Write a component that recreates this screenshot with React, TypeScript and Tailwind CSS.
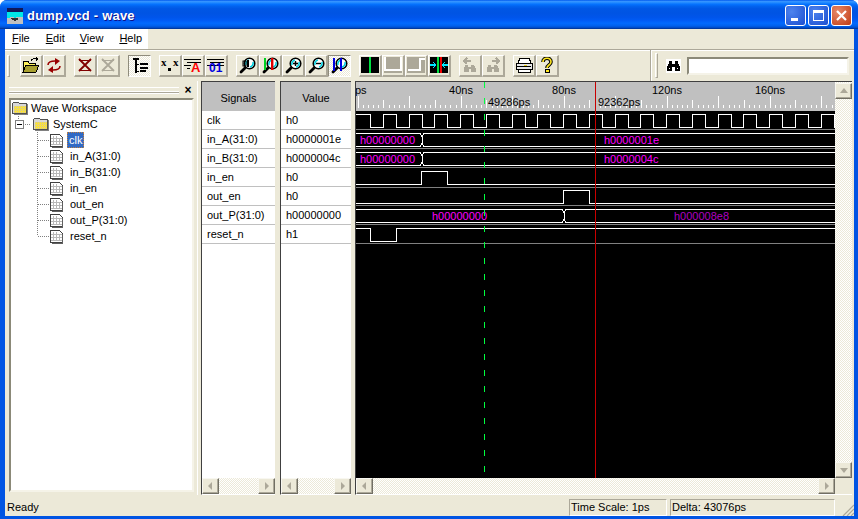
import React from "react";

const Ic = ({ children, w = 16, h = 16 }: { children: React.ReactNode; w?: number; h?: number }) => (
  <svg width={w} height={h} viewBox={`0 0 ${w} ${h}`} shapeRendering="crispEdges" className="block">
    {children}
  </svg>
);

const OpenIcon = () => (
  <Ic w={18}>
    <path d="M1 4h5l1 2h6v2H5L2 14H1z" fill="#fff35c" stroke="#000" />
    <path d="M4 8h13l-3 7H1z" fill="#a8a030" stroke="#000" />
    <path d="M9 4c1-2 3-3 5-2" fill="none" stroke="#000" />
    <path d="M14 0l3 2-3 2z" fill="#000" />
  </Ic>
);
const RefreshIcon = () => (
  <Ic w={18}>
    <g shapeRendering="auto">
      <path d="M3 8c0-3 3-4 7-4" fill="none" stroke="#900" strokeWidth="1.6" />
      <path d="M10 1l5 3-5 4z" fill="#900" />
      <path d="M15 9c0 3-3 4-7 4" fill="none" stroke="#900" strokeWidth="1.6" />
      <path d="M8 16l-5-3 5-4z" fill="#900" />
    </g>
  </Ic>
);
const CrossIcon = ({ c }: { c: string }) => (
  <Ic>
    <path d="M2 3h12M2 13h12" stroke={c} />
    <g shapeRendering="auto">
      <path d="M2 2l12 12M14 2L2 14" stroke={c} strokeWidth="1.8" />
    </g>
  </Ic>
);
const TreeIcon = () => (
  <Ic>
    <path d="M1 0h6v2H1zM3 2h2v13H3zM5 6h2v1H5zM5 13h2v1H5z" fill="#000" />
    <path d="M8 5h8v2H8zM8 9h8v2H8zM8 12h6v2H8z" fill="#000" />
  </Ic>
);
const XxIcon = () => (
  <Ic w={18}>
    <text x="0" y="9" fontFamily="Liberation Serif" fontSize="11" fontWeight="700" fill="#000">x</text>
    <text x="12" y="9" fontFamily="Liberation Serif" fontSize="11" fontWeight="700" fill="#000">x</text>
    <rect x="7" y="11" width="3" height="3" fill="#000" />
  </Ic>
);
const AIcon = () => (
  <Ic w={18}>
    <path d="M0 2h17M3 5h14M0 8h7M3 11h3" stroke="#000" />
    <text x="7" y="15" fontFamily="Liberation Sans" fontSize="13" fontWeight="700" fill="#f00">A</text>
  </Ic>
);
const ZeroOneIcon = () => (
  <Ic w={18}>
    <path d="M0 2h17M3 5h14M0 8h17" stroke="#000" />
    <text x="2" y="15" fontFamily="Liberation Sans" fontSize="12" fontWeight="700" fill="#0000e0">01</text>
  </Ic>
);
const Lens = ({ children }: { children?: React.ReactNode }) => (
  <svg width="17" height="17" viewBox="0 0 17 17" className="block">
    <path d="M6 11l-4 4" stroke="#000" strokeWidth="2.8" strokeLinecap="round" />
    <circle cx="10.5" cy="6.5" r="5.3" fill="#fff" stroke="#000" strokeWidth="1.5" />
    <path d="M7 8a4 4 0 0 1 3-5M14 5a4 4 0 0 1-3 5" fill="none" stroke="#00d0e0" strokeWidth="1.6" />
    {children}
  </svg>
);
const PanelIcon = ({ children }: { children: React.ReactNode }) => <Ic w={18}>{children}</Ic>;
const DisabledBino = ({ arrow }: { arrow: string }) => (
  <Ic>
    <path d="M3 8h3v2h3V8h3l2 4v3H9v-3H7v3H2v-3z" fill="#aca899" />
    <path d={arrow} fill="none" stroke="#aca899" strokeWidth="1.5" />
  </Ic>
);

const Btn = ({ children, on }: { children: React.ReactNode; on?: boolean }) => (
  <div
    className={
      on
        ? "w-[23px] h-[22px] flex items-center justify-center border border-t-[#8f8c7d] border-l-[#8f8c7d] border-r-white border-b-white bg-[repeating-conic-gradient(#ece9d8_0_25%,#ffffff_0_50%)] bg-[length:2px_2px]"
        : "w-[23px] h-[22px] flex items-center justify-center border-t border-l border-white border-r-2 border-b-2 border-r-[#aca899] border-b-[#aca899] bg-[#ece9d8]"
    }
  >
    {children}
  </div>
);

const Tri = ({ dir }: { dir: "l" | "r" | "u" | "d" }) => {
  const d = { l: "M7 2v8L3 6z", r: "M4 2v8l4-4z", u: "M6 3l4 5H2z", d: "M2 4h8L6 9z" }[dir];
  return (
    <svg width="12" height="12" viewBox="0 0 12 12" className="block">
      <path d={d} fill="#aca899" />
    </svg>
  );
};

const SBtn = ({ dir }: { dir: "l" | "r" | "u" | "d" }) => (
  <div className="w-[17px] h-[16px] shrink-0 flex items-center justify-center bg-[#ece9d8] border-t border-l border-[#f8f7f0] border-r border-b border-r-[#716f64] border-b-[#716f64] shadow-[inset_-1px_-1px_0_#aca899]">
    <Tri dir={dir} />
  </div>
);

const HScroll = () => (
  <div className="h-[16px] flex justify-between shrink-0 bg-[repeating-conic-gradient(#ece9d8_0_25%,#ffffff_0_50%)] bg-[length:2px_2px]">
    <SBtn dir="l" />
    <SBtn dir="r" />
  </div>
);

const DataCol = ({ title, rows, width }: { title: string; rows: string[]; width: string }) => (
  <div className={`${width} shrink-0 flex flex-col border-t border-l border-[#404040] border-b border-b-white`}>
    <div className="h-[29px] shrink-0 bg-[#c0c0c0] flex items-center justify-center pt-[3px]">{title}</div>
    <div className="flex-1 bg-white">
      {rows.map((r) => (
        <div key={r} className="h-[19px] flex items-center pl-[5px] pt-px border-b border-[#c0c0c0]">
          {r}
        </div>
      ))}
    </div>
    <HScroll />
  </div>
);

const FileIcon = () => (
  <svg width="14" height="15" viewBox="0 0 14 15" shapeRendering="crispEdges" className="block">
    <path d="M.5 1.5h9l3 3v9H.5z" fill="#fff" stroke="#404040" />
    <path d="M3 3v9M6 3v9M9 5v7M1 5h11M1 8h11M1 11h11" stroke="#b8b8b8" />
    <path d="M13 5v10H2v-1h10V5z" fill="#606060" />
  </svg>
);

const FolderIcon = () => (
  <svg width="16" height="14" viewBox="0 0 16 14" shapeRendering="crispEdges" className="block">
    <path d="M.5 2.5l1-1h5l1 1h7v10H.5z" fill="#d8d8d8" stroke="#505050" />
    <path d="M2 5h12v7H2z" fill="#f8e040" />
    <path d="M2 5h12M2 7h12M2 9h12M2 11h12" stroke="#d0c8a0" strokeDasharray="1 1" />
    <path d="M15 3v10H2v1h14V3z" fill="#808080" />
  </svg>
);

const treeSignals = ["in_A(31:0)", "in_B(31:0)", "in_en", "out_en", "out_P(31:0)", "reset_n"];

const TreePanel = () => (
  <div className="w-[192px] shrink-0 flex flex-col pl-1 pr-[3px]">
    <div className="h-[17px] shrink-0 flex items-center gap-[3px]">
      <div className="w-[170px] h-[6px] border-y border-t-white border-b-[#aca899] shadow-[0_1px_0_#fff,inset_0_-1px_0_#fff]" />
      <div className="flex-1 text-center font-bold text-[12px] leading-none text-black">×</div>
    </div>
    <div className="flex-1 relative bg-white border-2 border-t-[#8b8978] border-l-[#8b8978] border-r-[#f5f3e8] border-b-[#f5f3e8] mb-[3px]">
      <svg className="absolute left-0 top-0" width="60" height="150" shapeRendering="crispEdges">
        <path
          d="M7.5 12v8M12 24.5h7M26.5 32v104M27 40.5h12M27 56.5h12M27 72.5h12M27 88.5h12M27 104.5h12M27 120.5h12M27 136.5h12"
          stroke="#808080"
          strokeDasharray="1 1"
          fill="none"
        />
      </svg>
      <div className="relative h-4 flex items-center gap-[3px] pl-[1px]">
        <FolderIcon />
        <span>Wave Workspace</span>
      </div>
      <div className="relative h-4 flex items-center gap-[3px] pl-[4px]">
        <div className="w-[9px] h-[9px] border border-[#808080] bg-white flex items-center justify-center">
          <div className="w-[5px] h-px bg-black" />
        </div>
        <div className="ml-[6px]">
          <FolderIcon />
        </div>
        <span className="ml-[1px]">SystemC</span>
      </div>
      <div className="relative h-4 flex items-center pl-[39px]">
        <FileIcon />
        <span className="ml-[3px] h-4 px-[2px] flex items-center bg-[#316ac5] text-white outline-1 outline-dotted outline-offset-[-1px] outline-[#c08040]">clk</span>
      </div>
      {treeSignals.map((s) => (
        <div key={s} className="relative h-4 flex items-center pl-[39px]">
          <FileIcon />
          <span className="ml-[6px]">{s}</span>
        </div>
      ))}
    </div>
  </div>
);

const Wave = () => {
  const left = 356;
  const right = 835;
  const ticks: React.ReactNode[] = [];
  for (let i = 0; i <= 93; i++) {
    const x = Math.round(357.7 + i * 5.15) + 0.5;
    const top = i % 10 === 0 ? 96 : i % 5 === 0 ? 100 : 105;
    ticks.push(<line key={i} x1={x} x2={x} y1={top} y2={108} stroke="#fff" />);
  }
  let clk = "M356 114.5H370.5";
  let high = false;
  for (let k = 0; ; k++) {
    const x = Math.round(370 + 12.875 * k) + 0.5;
    if (x > right) break;
    clk += `V${high ? 114.5 : 127.5}`;
    clk += `H${Math.min(right, Math.round(370 + 12.875 * (k + 1)) + 0.5)}`;
    high = !high;
  }
  const hline = (y: number, c = "#fff") => <line x1={left} x2={right} y1={y + 0.5} y2={y + 0.5} stroke={c} />;
  const bus = (t: number, b: number, x: number) => (
    <>
      <path d={`M${left} ${t}.5H${x - 1}l2 3v${b - t - 6}l-2 3H${left}`} fill="none" stroke="#fff" />
      <path d={`M${right} ${t}.5H${x + 3}l-2 3v${b - t - 6}l2 3H${right}`} fill="none" stroke="#fff" />
    </>
  );
  const t11 = { fontFamily: "Liberation Sans", fontSize: 11 };
  return (
    <svg width="479" height="396" viewBox="356 82 479 396" className="block" shapeRendering="crispEdges">
      <rect x="356" y="82" width="479" height="396" fill="#000" />
      <rect x="356" y="82" width="479" height="29" fill="#c0c0c0" />
      {ticks}
      <text {...t11} x="355" y="94" fill="#000">ps</text>
      <g {...t11} fill="#000" textAnchor="middle">
        <text x="461" y="94">40ns</text>
        <text x="564" y="94">80ns</text>
        <text x="667" y="94">120ns</text>
        <text x="770" y="94">160ns</text>
      </g>
      <g {...t11} fill="#000">
        <text x="488" y="106">49286ps</text>
        <text x="598" y="106">92362ps</text>
      </g>
      <path d={clk} fill="none" stroke="#fff" />
      {hline(129, "#808080")}
      {hline(148, "#808080")}
      {hline(167, "#808080")}
      {hline(187, "#808080")}
      {hline(205, "#808080")}
      {hline(224, "#808080")}
      {hline(243, "#808080")}
      {bus(133, 146, 421)}
      {bus(152, 165, 421)}
      <path d="M356 184.5H421.5V171.5H447.5V184.5H835" fill="none" stroke="#fff" />
      <path d="M356 203.5H563.5V190.5H589.5V203.5H835" fill="none" stroke="#fff" />
      {bus(209, 222, 563)}
      <path d="M356 228.5H370.5V241.5H396.5V228.5H835" fill="none" stroke="#fff" />
      <g {...t11} fill="#ff00ff">
        <text x="360" y="144">h00000000</text>
        <text x="360" y="163">h00000000</text>
        <text x="604" y="144">h0000001e</text>
        <text x="604" y="163">h0000004c</text>
        <text x="432" y="220">h00000000</text>
      </g>
      <text {...t11} x="674" y="220" fill="#b000c0">h000008e8</text>
      <line x1="484.5" x2="484.5" y1="82" y2="478" stroke="#00ff40" strokeDasharray="6 10" />
      <line x1="595.5" x2="595.5" y1="82" y2="478" stroke="#c80000" />
    </svg>
  );
};

const Lines = ({ d }: { d: string }) => <path d={d} fill="none" stroke="#fff" strokeWidth="2" />;

export default function App() {
  const signals = ["clk", "in_A(31:0)", "in_B(31:0)", "in_en", "out_en", "out_P(31:0)", "reset_n"];
  const values = ["h0", "h0000001e", "h0000004c", "h0", "h0", "h00000000", "h1"];
  return (
    <div className="w-[858px] h-[519px] flex flex-col overflow-hidden rounded-t-[7px] bg-[#0054e3] pr-[4px] pb-[3px] pl-[5px] font-['Liberation_Sans',sans-serif] text-[11px] leading-none text-black">
      {/* title bar */}
      <div className="h-[29px] shrink-0 -ml-[5px] -mr-[4px] pl-[7px] pr-[6px] pt-[2px] flex items-center bg-[linear-gradient(#0058ee_0%,#3593ff_5%,#288eff_8%,#127dff_12%,#036ffc_16%,#0262ee_22%,#0057e5_30%,#0054e3_45%,#0055eb_60%,#005bf5_70%,#026afe_80%,#0062ef_88%,#0052d6_94%,#0040ab_97%,#003092_100%)]">
        <svg width="16" height="16" viewBox="0 0 16 16" shapeRendering="crispEdges" className="block shrink-0">
          <rect width="16" height="16" fill="#c0c0c0" />
          <rect width="16" height="4" fill="#101858" />
          <path d="M0 4h16v5H10l-2 1-3-1-5 1z" fill="#00e8e8" />
          <path d="M4 10h6l2 1-4 2-3-1z" fill="#303030" />
        </svg>
        <span className="ml-[4px] font-bold text-[13px] tracking-[0.2px] text-white [text-shadow:1px_1px_0_#0f1089]">dump.vcd - wave</span>
        <div className="ml-auto flex gap-[2px]">
          <div className="w-[21px] h-[21px] rounded-[3px] border border-white bg-[radial-gradient(circle_at_30%_30%,#4d83ee,#1c4fd0)] flex items-end pl-[5px] pb-[4px]">
            <div className="w-[7px] h-[3px] bg-white" />
          </div>
          <div className="w-[21px] h-[21px] rounded-[3px] border border-white bg-[radial-gradient(circle_at_30%_30%,#4d83ee,#1c4fd0)] flex items-center justify-center">
            <div className="w-[11px] h-[11px] border border-t-[3px] border-white" />
          </div>
          <div className="w-[21px] h-[21px] rounded-[3px] border border-white bg-[radial-gradient(circle_at_30%_30%,#e88868,#c03c14)] flex items-center justify-center">
            <svg width="13" height="13" viewBox="0 0 13 13" className="block">
              <path d="M2 2l9 9M11 2l-9 9" stroke="#fff" strokeWidth="2.2" />
            </svg>
          </div>
        </div>
      </div>

      {/* menu */}
      <div className="h-[20px] shrink-0 bg-[#ece9d8] flex">
        <div className="w-[143px] bg-white flex items-center pl-[7px] pb-[2px]">
          <span><u>F</u>ile</span>
          <span className="ml-[16px]"><u>E</u>dit</span>
          <span className="ml-[15px]"><u>V</u>iew</span>
          <span className="ml-[16px]"><u>H</u>elp</span>
        </div>
      </div>

      {/* toolbar */}
      <div className="h-[32px] shrink-0 bg-[#ece9d8] border-t border-[#aca899] shadow-[inset_0_1px_0_#fff] flex items-center">
        <div className="w-[3px] h-[22px] ml-[2px] mr-[10px] border border-t-white border-l-white border-r-[#aca899] border-b-[#aca899]" />
        <div className="flex"><Btn><OpenIcon /></Btn><Btn><RefreshIcon /></Btn></div>
        <div className="flex ml-[8px]"><Btn><CrossIcon c="#800000" /></Btn><Btn><CrossIcon c="#aca899" /></Btn></div>
        <div className="flex ml-[8px]"><Btn on><TreeIcon /></Btn></div>
        <div className="flex ml-[8px]"><Btn><XxIcon /></Btn><Btn><AIcon /></Btn><Btn><ZeroOneIcon /></Btn></div>
        <div className="flex ml-[8px]">
          <Btn><Lens><rect x="8" y="3" width="2" height="7" fill="#000" /><rect x="4" y="4" width="3" height="5" fill="none" stroke="#000" /></Lens></Btn>
          <Btn><Lens><rect x="2" y="1" width="2" height="12" fill="#00d020" /><rect x="9" y="1" width="2.4" height="12" fill="#e00000" /></Lens></Btn>
          <Btn><Lens><path d="M8 6.5h5M10.5 4v5" stroke="#000" strokeWidth="1.4" /></Lens></Btn>
          <Btn><Lens><path d="M8 6.5h5" stroke="#000" strokeWidth="1.4" /></Lens></Btn>
          <Btn on><Lens><rect x="2" y="1" width="2" height="13" fill="#0000e0" /><rect x="9" y="1" width="2" height="13" fill="#0000e0" /></Lens></Btn>
        </div>
        <div className="flex ml-[8px]">
          <Btn><PanelIcon><rect width="18" height="16" fill="#000" /><rect x="8" width="2" height="16" fill="#00e040" /></PanelIcon></Btn>
          <Btn><PanelIcon><rect width="18" height="16" fill="#aca899" /><Lines d="M1 0v13h16V0" /></PanelIcon></Btn>
          <Btn><PanelIcon><rect width="18" height="16" fill="#aca899" /><Lines d="M1 13h12V2h5" /></PanelIcon></Btn>
          <Btn>
            <PanelIcon>
              <rect width="18" height="16" fill="#000" />
              <rect x="7" width="2" height="16" fill="#00e040" />
              <rect x="10" width="2" height="16" fill="#f00000" />
              <path d="M0 8h6M12 8h6M3 5l3 3-3 3M15 5l-3 3 3 3" fill="none" stroke="#00e8ff" strokeWidth="1.4" />
            </PanelIcon>
          </Btn>
        </div>
        <div className="flex ml-[8px]">
          <Btn><DisabledBino arrow="M2 4h7M5 1L2 4l3 3" /></Btn>
          <Btn><DisabledBino arrow="M7 4h7M11 1l3 3-3 3" /></Btn>
        </div>
        <div className="flex ml-[8px]">
          <Btn>
            <Ic w={18}>
              <path d="M5 1h9l2 5H3z" fill="#fff" stroke="#000" />
              <path d="M1 6h16v6H1z" fill="#e8e8e8" stroke="#000" />
              <path d="M3 12h12v3H3z" fill="#fff" stroke="#000" />
              <path d="M2 9h14" stroke="#000" />
              <path d="M9 8h3v1H9z" fill="#e8d020" />
            </Ic>
          </Btn>
          <Btn>
            <Ic>
              <g shapeRendering="auto">
                <path d="M4 5c0-5 8-5 8 0 0 3-4 3-4 6" fill="none" stroke="#000" strokeWidth="3.6" />
                <path d="M4 5c0-5 8-5 8 0 0 3-4 3-4 6" fill="none" stroke="#ffe820" strokeWidth="1.6" />
              </g>
              <rect x="6" y="12" width="4" height="3" fill="#ffe820" stroke="#000" />
            </Ic>
          </Btn>
        </div>
        <div className="w-[2px] h-[31px] ml-[91px] border-l border-[#aca899] border-r border-r-white" />
        <div className="w-[3px] h-[25px] ml-[3px] border border-t-white border-l-white border-r-[#aca899] border-b-[#aca899]" />
        <div className="w-[15px] h-[14px] ml-[8px] bg-white flex items-center justify-center">
          <svg width="13" height="10" viewBox="0 0 16 12" className="block" shapeRendering="crispEdges">
            <path d="M2 0h4v3h4V0h4v3l2 5v4H10V7H6v5H0V8l2-5z" fill="#000" />
            <path d="M3 8h1v2H3zM12 8h1v2h-1z" fill="#fff" />
          </svg>
        </div>
        <div className="w-[162px] h-[18px] ml-[6px] bg-white border-2 border-t-[#8b8978] border-l-[#8b8978] border-r-[#f5f3e8] border-b-[#f5f3e8]" />
      </div>

      {/* main */}
      <div className="flex-1 min-h-0 flex bg-[#ece9d8] border-b border-[#ece9d8]">
        <TreePanel />
        <div className="w-[4px] shrink-0 border-l border-white" />
        <DataCol title="Signals" rows={signals} width="w-[74px]" />
        <div className="w-[5px] shrink-0" />
        <DataCol title="Value" rows={values} width="w-[71px]" />
        <div className="w-[4px] shrink-0" />
        <div className="flex-1 min-w-0 flex flex-col border-l border-t border-[#404040] border-b border-b-white">
          <div className="h-[396px] shrink-0 flex">
            <div className="w-[479px] shrink-0">
              <Wave />
            </div>
            <div className="w-[17px] shrink-0 flex flex-col justify-between pt-[1px] bg-[repeating-conic-gradient(#ece9d8_0_25%,#ffffff_0_50%)] bg-[length:2px_2px]">
              <SBtn dir="u" />
              <SBtn dir="d" />
            </div>
          </div>
          <div className="w-[479px]">
            <HScroll />
          </div>
        </div>
        <div className="w-[2px] shrink-0" />
      </div>

      {/* status bar */}
      <div className="h-[20px] shrink-0 bg-[#ece9d8] flex items-center pt-[2px] relative">
        <span className="ml-[2px]">Ready</span>
        <div className="ml-auto w-[98px] h-[17px] flex items-center pl-[1px] border border-t-[#aca899] border-l-[#aca899] border-r-white border-b-white">Time Scale: 1ps</div>
        <div className="ml-[3px] mr-[19px] w-[165px] h-[17px] flex items-center pl-[1px] border border-t-[#aca899] border-l-[#aca899] border-r-white border-b-white">Delta: 43076ps</div>
        <svg className="absolute right-0 bottom-0" width="12" height="12" viewBox="0 0 12 12">
          <path d="M12 1L1 12M12 5L5 12M12 9L9 12" stroke="#aca899" strokeWidth="1.2" />
        </svg>
      </div>
    </div>
  );
}
